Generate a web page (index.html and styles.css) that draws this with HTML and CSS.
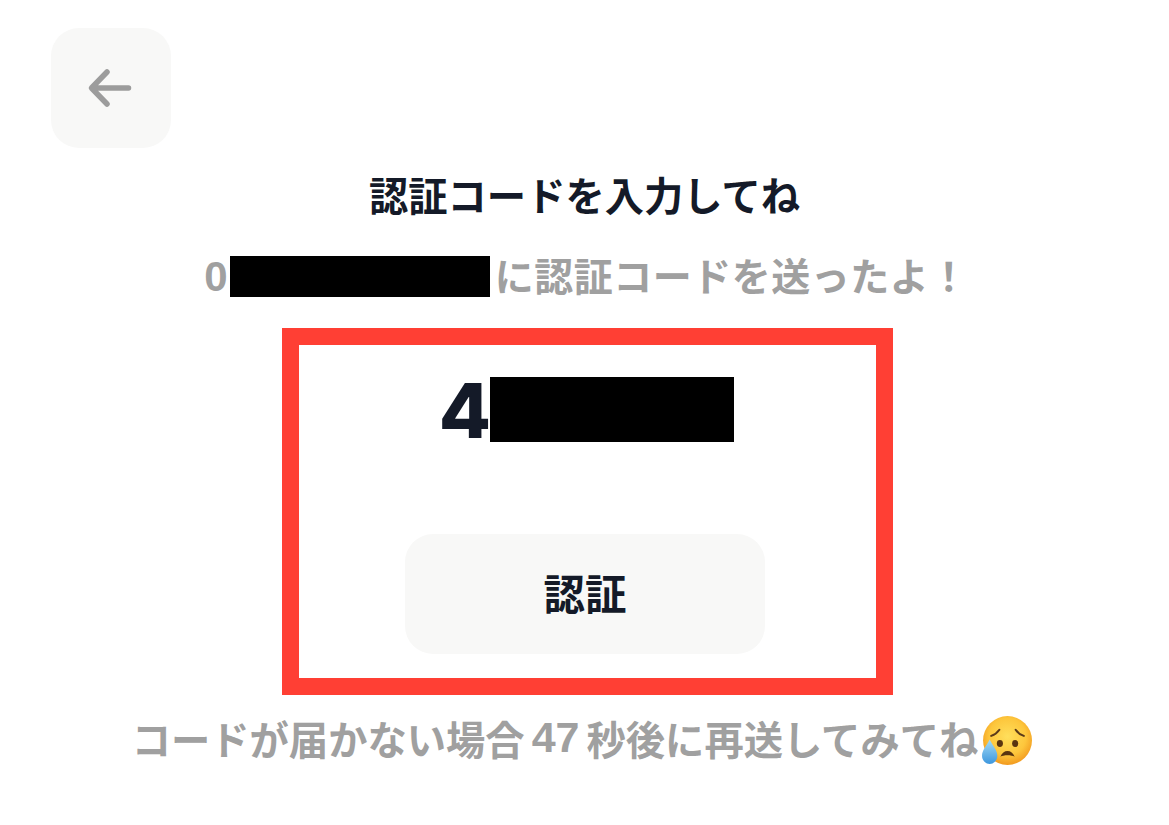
FILE: index.html
```html
<!DOCTYPE html>
<html lang="ja">
<head>
<meta charset="utf-8">
<title>認証コード</title>
<link rel="stylesheet" href="styles.css">
</head>
<body>
<main class="page">
  <button class="back" aria-label="戻る">
    <svg class="back-icon" viewBox="0 0 48 40" width="48" height="40"><path d="M41.500 20H5M20 4L4.500 20L20 36" fill="none" stroke="#9c9c9c" stroke-width="5.500" stroke-linecap="round" stroke-linejoin="round"/></svg>
  </button>
  <h1 class="title">認証コードを入力してね</h1>
  <p class="sub"><span class="zero">0</span><span class="mask-phone"></span><span class="sub-text">に認証コードを送ったよ！</span></p>
  <section class="frame">
    <div class="code"><span class="digit">4</span><span class="mask-code"></span></div>
    <button class="verify"><span class="verify-text">認証</span></button>
  </section>
  <p class="resend"><span class="resend-text">コードが届かない場合</span><span class="num">47</span><span class="resend-text">秒後に再送してみてね</span>
    <svg class="emoji" viewBox="0 0 52 52" width="53" height="53">
      <defs>
        <radialGradient id="face" cx="50%" cy="42%" r="58%"><stop offset="0" stop-color="#ffdf5c"/><stop offset="0.65" stop-color="#fdc63c"/><stop offset="1" stop-color="#f29a1f"/></radialGradient>
        <linearGradient id="drop" x1="0" y1="0" x2="0" y2="1"><stop offset="0" stop-color="#a5dcf5"/><stop offset="1" stop-color="#3d97de"/></linearGradient>
      </defs>
      <circle cx="27" cy="25" r="24" fill="url(#face)"/>
      <path d="M11 20.500C14 19.500 17 17.500 19 14.500M43 20.500C40 19.500 37 17.500 35 14.500" fill="none" stroke="#5b3a1a" stroke-width="2" stroke-linecap="round"/>
      <ellipse cx="19.500" cy="28" rx="3" ry="3.400" fill="#5a3510"/>
      <ellipse cx="34.500" cy="28" rx="3" ry="3.400" fill="#5a3510"/>
      <path d="M20 41C21.500 37 24 35.300 27 35.300C30 35.300 32.500 37 34 41C31 39 23 39 20 41Z" fill="#5a3510"/>
      <path d="M9.500 24C6 31 2 34.500 2 40C2 44.500 5.300 48 9.500 48C13.700 48 17 44.500 17 40C17 34.500 13 31 9.500 24Z" fill="url(#drop)"/>
    </svg>
  </p>
</main>
</body>
</html>
```
FILE: styles.css
```css
* { box-sizing: border-box; }
html, body { margin: 0; height: 100%; background: #fff; }
body { font-family: "Noto Sans CJK JP", "Liberation Sans", sans-serif; overflow: hidden; }
.page { display: flex; flex-direction: column; align-items: center; padding-top: 28px; }
.back {
  align-self: flex-start; margin-left: 51px; width: 120px; height: 120px;
  display: flex; align-items: center; justify-content: center;
  background: #f8f8f7; border: 0; border-radius: 28px; padding: 0;
}
.title { margin: 21px 0 0; font-size: 39.300px; line-height: 50px; font-weight: 700; color: #141a28; }
.sub {
  margin: 37px 0 0 4px; height: 41px; display: flex; align-items: center;
  font-size: 39px; font-weight: 700; color: #a0a0a0; line-height: 41px;
}
.zero { font-family: "Liberation Sans", sans-serif; font-size: 42px; margin-right: 2px; }
.mask-phone { display: block; width: 260px; height: 41px; background: #000; }
.sub-text { margin: 0 0 4px 5px; letter-spacing: 0.500px; }
.frame {
  margin: 31px 0 0 6px; width: 611px; height: 367px;
  border: 17px solid #ff3f34;
  display: flex; flex-direction: column; align-items: center;
  padding-top: 32px;
}
.code {
  display: flex; align-items: center; height: 65px; margin-left: -2px;
  font-family: Inter, "Liberation Sans", sans-serif; font-size: 76px; font-weight: 800; color: #141a28;
}
.digit { margin-right: -1px; }
.mask-code { display: block; width: 244px; height: 65px; background: #000; }
.verify {
  margin: 92px 0 0 -5px; width: 360px; height: 120px; padding: 0 0 5px;
  background: #f8f8f7; border: 0; border-radius: 28px;
  font-family: inherit; font-size: 41.500px; font-weight: 700; color: #141a28;
}
.resend {
  margin: 20px 0 0 -4px; display: flex; align-items: center; height: 53px;
  font-size: 39.300px; font-weight: 700; color: #a0a0a0; white-space: nowrap;
}
.resend-text { margin-bottom: 8px; }
.num { margin: 0 7px 8px; font-family: "Liberation Sans", sans-serif; font-size: 43px; }
.emoji { margin-left: 2px; }
```
